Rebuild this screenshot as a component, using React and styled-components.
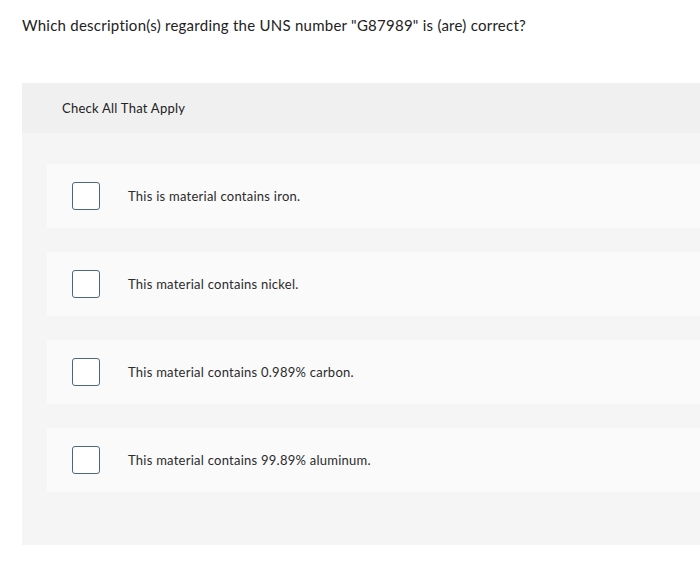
import React from 'react';
import styled, { createGlobalStyle } from 'styled-components';

const GlobalStyle = createGlobalStyle`
  html, body {
    margin: 0;
    padding: 0;
    background: #ffffff;
    overflow: hidden;
  }
  body {
    font-family: Lato, "Open Sans", Arial, sans-serif;
    color: #2b2b2b;
    letter-spacing: 0.25px;
  }
`;

const Page = styled.div`
  width: 700px;
  height: 572px;
  padding: 15px 0 0 22px;
  box-sizing: border-box;
`;

const Question = styled.div`
  font-size: 15px;
  line-height: 20px;
  color: #222;
  margin: 0 0 48px 0;
`;

const Panel = styled.div`
  background: #f5f5f5;
  padding-bottom: 53px;
`;

const PanelHeader = styled.div`
  background: #f0f0f0;
  height: 50px;
  display: flex;
  align-items: center;
  padding-left: 40px;
  font-size: 13px;
  color: #222;
`;

const Options = styled.div`
  display: flex;
  flex-direction: column;
  gap: 24px;
  padding: 31px 0 0 25px;
`;

const Option = styled.label`
  display: flex;
  align-items: center;
  height: 64px;
  background: #fafafa;
  padding-left: 25px;
  font-size: 13px;
  color: #2b2b2b;
  cursor: pointer;
`;

const Box = styled.span`
  width: 26px;
  height: 26px;
  border: 1.5px solid #4e6679;
  border-radius: 3px;
  background: #ffffff;
  flex-shrink: 0;
  margin-right: 28px;
`;

const options = [
  'This is material contains iron.',
  'This material contains nickel.',
  'This material contains 0.989% carbon.',
  'This material contains 99.89% aluminum.',
];

export default function App() {
  return (
    <Page>
      <GlobalStyle />
      <Question>
        Which description(s) regarding the UNS number "G87989" is (are) correct?
      </Question>
      <Panel>
        <PanelHeader>Check All That Apply</PanelHeader>
        <Options>
          {options.map((text) => (
            <Option key={text}>
              <Box />
              {text}
            </Option>
          ))}
        </Options>
      </Panel>
    </Page>
  );
}
